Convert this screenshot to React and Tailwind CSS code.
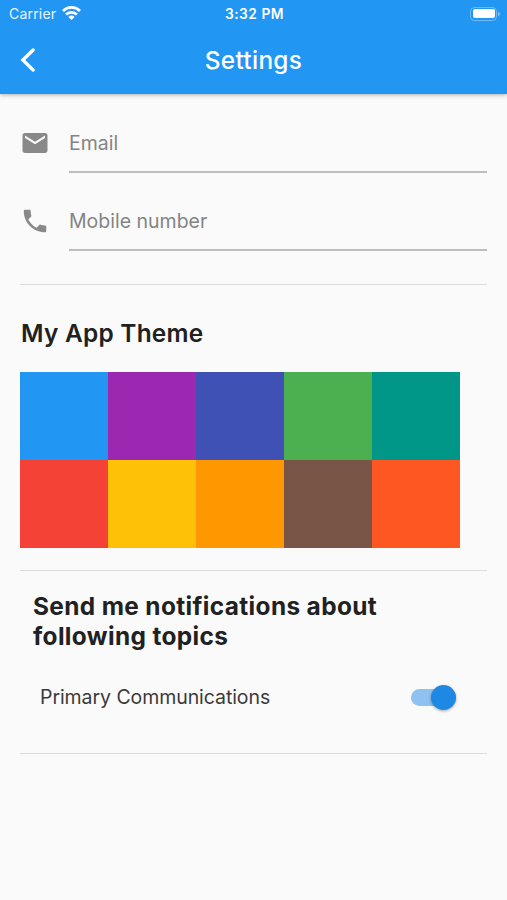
import React, { useState } from 'react';
import { MdEmail, MdPhone } from 'react-icons/md';

const themeColors = [
  { name: "Blue", className: "bg-[#2196f3]" },
  { name: "Purple", className: "bg-[#9c27b0]" },
  { name: "Indigo", className: "bg-[#3f51b5]" },
  { name: "Green", className: "bg-[#4caf50]" },
  { name: "Teal", className: "bg-[#009688]" },
  { name: "Red", className: "bg-[#f44336]" },
  { name: "Amber", className: "bg-[#ffc107]" },
  { name: "Orange", className: "bg-[#ff9800]" },
  { name: "Brown", className: "bg-[#795548]" },
  { name: "Deep orange", className: "bg-[#ff5722]" },
];

function StatusBar() {
  return (
    <div className="grid grid-cols-3 items-center h-7 pl-[9px] pr-[7px] text-[14px] leading-none">
      <div className="flex items-center gap-[6px] text-white/90">
        <span className="tracking-[0.2px]">Carrier</span>
        <svg className="w-[19px] h-[14px] -mt-0.5 text-white" viewBox="0 0 19 14" fill="none" stroke="currentColor" strokeWidth="2.8">
          <path d="M1 4.9a12.2 12.2 0 0 1 17 0" />
          <path d="M4.1 8.5a7.7 7.7 0 0 1 10.8 0" />
          <path d="M9.5 14 6.4 10.9a4.4 4.4 0 0 1 6.2 0z" fill="currentColor" stroke="none" />
        </svg>
      </div>
      <span className="pt-px text-center font-semibold text-[13.8px] tracking-[0.5px]">3:32 PM</span>
      <div className="flex items-center justify-end gap-[1px] -mt-px">
        <div className="w-[27px] h-[14px] p-[1.5px] rounded-[4.5px] border border-white/35">
          <div className="w-full h-full rounded-[2px] bg-white"></div>
        </div>
        <div className="w-[2px] h-[4px] rounded-r-full bg-white/40"></div>
      </div>
    </div>
  );
}

function Header() {
  return (
    <header className="relative z-10 h-[94px] bg-[#2196f3] text-white shadow-[0_1px_4px_rgba(0,0,0,0.3)]">
      <StatusBar />
      <div className="grid grid-cols-[1fr_auto_1fr] items-center h-[64px]">
        <button type="button" aria-label="Back" className="ml-5 w-4 h-6">
          <svg className="w-4 h-6" viewBox="0 0 16 24" fill="none" stroke="currentColor" strokeWidth="3.3" strokeLinecap="round">
            <path d="M13.1 2 2.9 12l10.2 10" />
          </svg>
        </button>
        <h1 className="text-[24.4px] tracking-[0.3px] font-medium">Settings</h1>
      </div>
    </header>
  );
}

function Field({ icon: Icon, label, type }) {
  return (
    <label className="flex h-[78px]">
      <Icon className="w-[30px] h-[30px] mt-[17px] mr-[19px] shrink-0 text-[#898989]" />
      <input type={type} placeholder={label} className="w-full h-[62px] pt-1 border-b-2 border-[#bdbdbd] bg-transparent outline-none text-[19.5px] text-[#212121] placeholder:text-[#848484]" />
    </label>
  );
}

export default function App() {
  const [primary, setPrimary] = useState(true);

  return (
    <div className="h-[900px] bg-[#fafafa] text-[#212121] font-['Inter',sans-serif]">
      <Header />
      <main className="px-5">
        <section className="h-[191px] pt-[17px] border-b border-[#dcdcdc]">
          <Field icon={MdEmail} label="Email" type="email" />
          <Field icon={MdPhone} label="Mobile number" type="tel" />
        </section>
        <section className="h-[286px] pt-[33px] border-b border-[#dcdcdc]">
          <h2 className="pl-px text-[24.4px] leading-[30px] tracking-[0.25px] font-semibold">My App Theme</h2>
          <div className="grid grid-cols-5 w-[440px] mt-[24px]">
            {themeColors.map(color => 
              <button type="button" key={color.name} aria-label={color.name} className={`h-[88px] ${color.className}`} />
            )}
          </div>
        </section>
        <section className="h-[183px] pt-[21px] pl-[13px] border-b border-[#dcdcdc]">
          <h2 className="w-[400px] text-[24.4px] leading-[29.5px] tracking-[0.37px] font-bold">
            Send me notifications about following topics
          </h2>
          <div className="flex items-center justify-between h-12 mt-[22px] pl-[7px] pr-[31px]">
            <span className="pt-px text-[19.5px] tracking-[-0.07px] text-[#3a3a3a]">Primary Communications</span>
            <button type="button" role="switch" aria-checked={primary} aria-label="Primary Communications" onClick={() => setPrimary(!primary)} className="flex items-center w-[45px] h-[25px]">
              <span className={`flex items-center w-[45px] h-[17px] rounded-full ${primary ? "bg-[#8fc2f0] justify-end" : "bg-[#b5b5b5] justify-start"}`}>
                <span className={`w-[25px] h-[25px] rounded-full shrink-0 shadow-[0_1px_3px_rgba(0,0,0,0.35)] ${primary ? "bg-[#1e88e5]" : "bg-[#fafafa]"}`}></span>
              </span>
            </button>
          </div>
        </section>
      </main>
    </div>
  );
}
